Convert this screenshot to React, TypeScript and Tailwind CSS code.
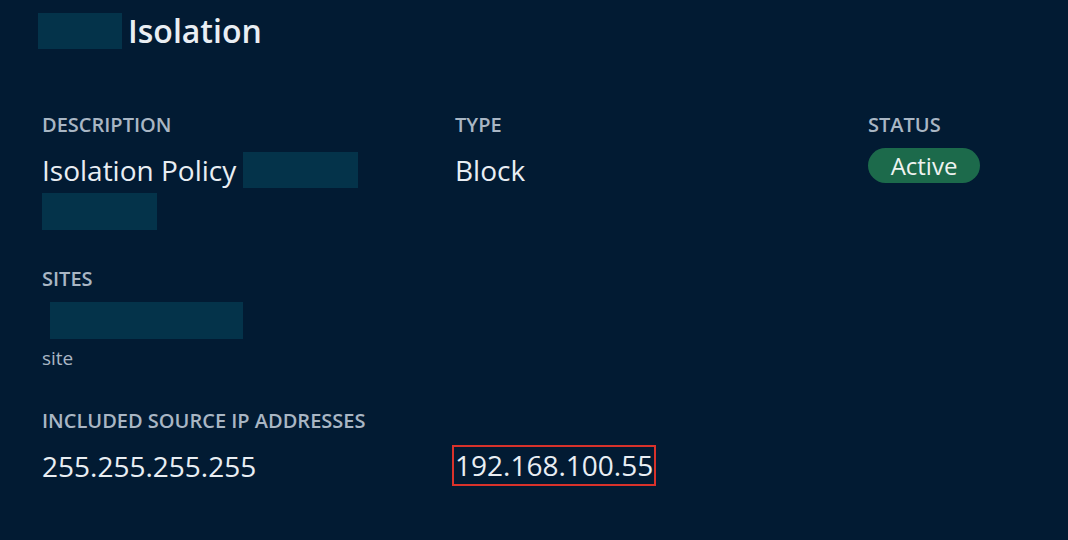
const Redacted = ({ className = '' }: { className?: string }) => (
  <div className={`bg-[#04334a] ${className}`} />
);

function Field({ label, children }: { label: string; children: React.ReactNode }) {
  return (
    <div className="flex flex-col">
      <div className="text-[20px] leading-[28px] font-semibold text-[#a9b6c4]">{label}</div>
      {children}
    </div>
  );
}

export default function App() {
  return (
    <div className="min-h-[540px] w-full bg-[#021b33] pl-[42px] font-['Open_Sans',sans-serif] text-[#e9eef3]">
      <div className="flex items-center gap-[6px] pt-[11px] -ml-[4px]">
        <Redacted className="w-[84px] h-[36px]" />
        <h1 className="text-[32px] leading-[40px] font-semibold">Isolation</h1>
      </div>

      <div className="grid grid-cols-[413px_413px_1fr] mt-[60px]">
        <Field label="DESCRIPTION">
          <div className="mt-[13px] flex items-center">
            <span className="text-[28px] leading-[36px]">Isolation Policy</span>
            <Redacted className="ml-[7px] w-[115px] h-[36px]" />
          </div>
          <Redacted className="mt-[5px] w-[115px] h-[37px]" />
        </Field>
        <Field label="TYPE">
          <div className="mt-[13px] text-[28px] leading-[36px]">Block</div>
        </Field>
        <Field label="STATUS">
          <div className="mt-[9px]">
            <span className="inline-flex items-center justify-center w-[112px] h-[35px] rounded-full bg-[#1c6a4b] text-[24px] leading-[35px] text-[#eef3f0]">
              Active
            </span>
          </div>
        </Field>
      </div>

      <div className="mt-[35px]">
        <Field label="SITES">
          <Redacted className="mt-[9px] ml-[8px] w-[193px] h-[37px]" />
          <div className="mt-[7px] text-[19px] leading-[24px] text-[#a9b6c4]">site</div>
        </Field>
      </div>

      <div className="mt-[37px]">
        <Field label="INCLUDED SOURCE IP ADDRESSES">
          <div className="mt-[10px] grid grid-cols-[413px_1fr] items-center">
            <span className="text-[28px] leading-[36px]">255.255.255.255</span>
            <span className="-ml-[3px] w-fit border-2 border-[#d9322b] px-[1px] text-[28px] leading-[37px]">
              192.168.100.55
            </span>
          </div>
        </Field>
      </div>
    </div>
  );
}
